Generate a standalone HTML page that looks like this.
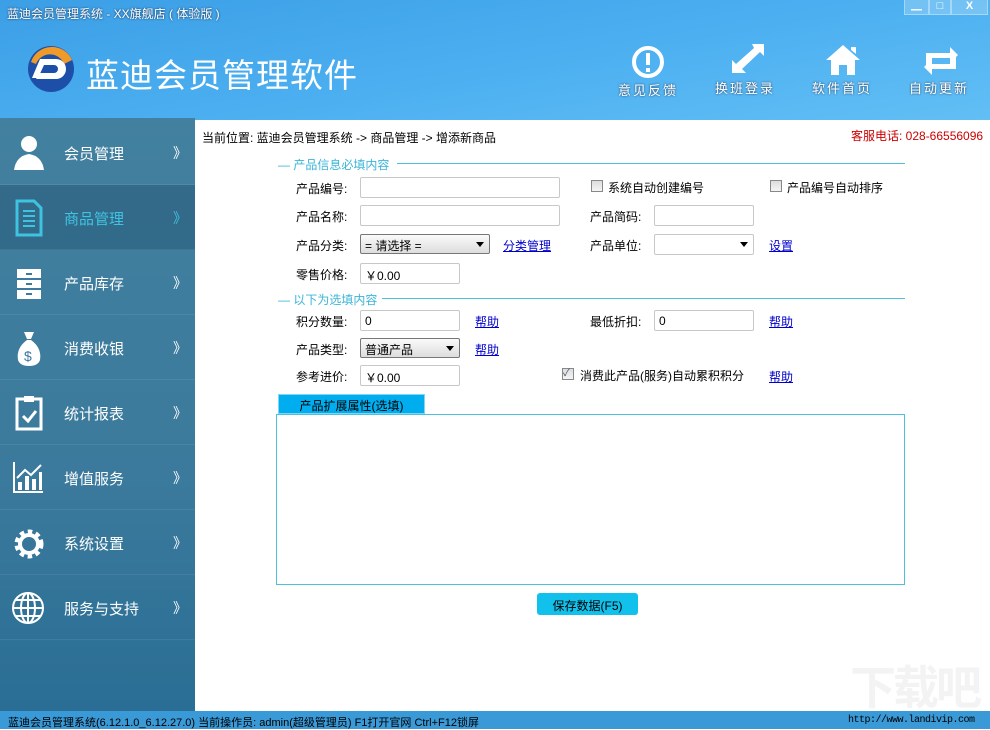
<!DOCTYPE html>
<html><head><meta charset="utf-8"><style>
*{margin:0;padding:0;box-sizing:border-box}
body{width:990px;height:729px;position:relative;overflow:hidden;background:#fff;font-family:"Liberation Sans","Noto Sans CJK SC",sans-serif;font-size:12px;color:#000}
.a{position:absolute;white-space:nowrap}
#hd{left:0;top:0;width:990px;height:120px;background:linear-gradient(170deg,#3c9fe6 0%,#4aaef0 50%,#62bff5 100%)}
.tb{color:#fff;font-size:13px;letter-spacing:2px;text-align:center;width:90px;text-shadow:0 0 2px #235}
#sb{left:0;top:118px;width:195px;height:593px;background:linear-gradient(180deg,#43809f,#3b7a9c 60%,#2a6e95)}
.it{left:0;width:195px;height:65px;border-bottom:1px solid rgba(255,255,255,.08)}
.it span{position:absolute;left:64px;top:23px;font-size:15px;color:#fff}
.it b{position:absolute;left:173px;top:23px;font-size:14px;color:#fff;font-weight:normal}
.inp{position:absolute;height:21px;border:1px solid #c8c8c8;border-radius:2px;background:#fff;font-size:12px;padding:3px 4px}
.lnk{color:#00c;text-decoration:underline}
.cb{position:absolute;width:12px;height:12px;border:1px solid #888;background:linear-gradient(#ddd,#f5f5f5)}
.sel{position:absolute;height:20px;border:1px solid #777;border-radius:2px;background:linear-gradient(#fafafa,#ddd);padding:2px 4px}
.arr{position:absolute;right:5px;top:7px;border:4px solid transparent;border-top:5px solid #000}
.wb{position:absolute;top:0;height:15px;background:rgba(255,255,255,.22);border:1px solid rgba(255,255,255,.35);border-top:none;color:#fff;font-size:11px;text-align:center;line-height:13px}
</style></head><body>
<div id="hd" class="a"></div>
<div class="a" style="left:7px;top:5px;color:#fff;font-size:12px;text-shadow:0 0 2px #124">蓝迪会员管理系统 - XX旗舰店 ( 体验版 )</div>
<div class="wb" style="left:904px;width:25px">▁</div>
<div class="wb" style="left:929px;width:22px">□</div>
<div class="wb" style="left:951px;width:37px;font-weight:bold">X</div>
<svg class="a" style="left:26px;top:44px" width="50" height="50" viewBox="0 0 50 50"><circle cx="25" cy="25" r="23" fill="#1e4fa8"/><path d="M5 18 A22 22 0 0 1 46 16 L38 20 A15 15 0 0 0 10 20Z" fill="#f09a2a"/><path d="M14 15 H30 A10 10 0 0 1 30 35 H10 L14 29 H28 A4 4 0 0 0 28 21 H18 L12 34 H6Z" fill="#fff"/></svg>
<div class="a" style="left:86px;top:49px;color:#fff;font-size:33px;letter-spacing:1px">蓝迪会员管理软件</div>
<svg class="a" style="left:631px;top:45px" width="34" height="34"><circle cx="17" cy="17" r="14" fill="none" stroke="#fff" stroke-width="4"/><rect x="15" y="8" width="4" height="12" fill="#fff"/><rect x="15" y="23" width="4" height="4" fill="#fff"/></svg>
<div class="a tb" style="left:603px;top:80px">意见反馈</div>
<svg class="a" style="left:728px;top:42px" width="38" height="34"><path d="M24 2 H36 V14 L32 10 L14 27 L18 31 H4 V18 L8 22 L26 6Z" fill="#fff"/></svg>
<div class="a tb" style="left:700px;top:78px">换班登录</div>
<svg class="a" style="left:825px;top:43px" width="36" height="34"><path d="M18 2 L35 17 H30 V32 H22 V22 H14 V32 H6 V17 H1Z M26 4 H31 V11 L26 7Z" fill="#fff"/></svg>
<div class="a tb" style="left:797px;top:78px">软件首页</div>
<svg class="a" style="left:922px;top:45px" width="38" height="32"><path d="M4 22 V8 H28 V2 L36 10 L28 18 V13 H10 V22Z M34 10 V24 H10 V30 L2 22 L10 14 V19 H28 V10Z" fill="#fff"/></svg>
<div class="a tb" style="left:894px;top:78px">自动更新</div>

<div id="sb" class="a"></div>
<div class="a it" style="top:120px"><span>会员管理</span><b>》</b></div>
<div class="a it" style="top:185px;background:rgba(20,60,90,.3)"><span style="color:#3ec3e0">商品管理</span><b style="color:#3ec3e0">》</b></div>
<div class="a it" style="top:250px"><span>产品库存</span><b>》</b></div>
<div class="a it" style="top:315px"><span>消费收银</span><b>》</b></div>
<div class="a it" style="top:380px"><span>统计报表</span><b>》</b></div>
<div class="a it" style="top:445px"><span>增值服务</span><b>》</b></div>
<div class="a it" style="top:510px"><span>系统设置</span><b>》</b></div>
<div class="a it" style="top:575px"><span>服务与支持</span><b>》</b></div>
<svg class="a" style="left:12px;top:134px" width="34" height="38"><circle cx="17" cy="10" r="8" fill="#fff"/><path d="M2 36 Q4 22 17 20 Q30 22 32 36Z" fill="#fff"/></svg>
<svg class="a" style="left:15px;top:199px" width="28" height="38"><path d="M2 2 H19 L26 9 V36 H2Z" fill="none" stroke="#3ec3e0" stroke-width="3"/><path d="M8 12H20M8 17H20M8 22H20M8 27H20" stroke="#3ec3e0" stroke-width="2"/></svg>
<svg class="a" style="left:15px;top:267px" width="28" height="34"><rect x="2" y="2" width="24" height="30" fill="#fff"/><path d="M2 12H26M2 22H26" stroke="#3b7a9c" stroke-width="2"/><path d="M11 7H17M11 17H17M11 27H17" stroke="#3b7a9c" stroke-width="2"/></svg>
<svg class="a" style="left:14px;top:330px" width="30" height="38"><path d="M10 2 H20 L17 9 H13Z M13 10 Q2 18 4 30 Q6 36 15 36 Q24 36 26 30 Q28 18 17 10Z" fill="#fff"/><text x="10" y="31" font-size="14" fill="#3b7a9c" font-family="Liberation Sans">$</text></svg>
<svg class="a" style="left:14px;top:394px" width="30" height="38"><rect x="3" y="5" width="24" height="30" fill="none" stroke="#fff" stroke-width="3"/><rect x="10" y="2" width="10" height="6" fill="#fff"/><path d="M9 22 L14 27 L22 17" fill="none" stroke="#fff" stroke-width="3"/></svg>
<svg class="a" style="left:12px;top:460px" width="32" height="34"><path d="M2 2 V32 H31" fill="none" stroke="#fff" stroke-width="2"/><path d="M6 30 V22 H10 V30Z M13 30 V16 H17 V30Z M20 30 V19 H24 V30Z M27 30 V12 H30 V30Z" fill="#fff"/><path d="M5 18 L13 10 L19 15 L29 5" fill="none" stroke="#fff" stroke-width="2"/></svg>
<svg class="a" style="left:12px;top:527px" width="34" height="34"><circle cx="17" cy="17" r="11" fill="none" stroke="#fff" stroke-width="7" stroke-dasharray="4 3.2"/><circle cx="17" cy="17" r="9" fill="none" stroke="#fff" stroke-width="4"/></svg>
<svg class="a" style="left:11px;top:591px" width="34" height="34"><circle cx="17" cy="17" r="15" fill="none" stroke="#fff" stroke-width="2"/><ellipse cx="17" cy="17" rx="7" ry="15" fill="none" stroke="#fff" stroke-width="2"/><path d="M2 17H32M5 9H29M5 25H29M17 2V32" stroke="#fff" stroke-width="2"/></svg>

<div class="a" style="left:202px;top:129px">当前位置: 蓝迪会员管理系统 -&gt; 商品管理 -&gt; 增添新商品</div>
<div class="a" style="left:851px;top:127px;color:#c00;font-size:12px">客服电话: 028-66556096</div>

<div class="a" style="left:278px;top:156px;color:#3ab5d8">— 产品信息必填内容</div>
<div class="a" style="left:397px;top:163px;width:508px;height:1px;background:#4cc0dc"></div>
<div class="a" style="left:296px;top:180px">产品编号:</div><div class="inp" style="left:360px;top:177px;width:200px"></div>
<div class="cb" style="left:591px;top:180px"></div><div class="a" style="left:608px;top:179px">系统自动创建编号</div>
<div class="cb" style="left:770px;top:180px"></div><div class="a" style="left:787px;top:179px">产品编号自动排序</div>
<div class="a" style="left:296px;top:208px">产品名称:</div><div class="inp" style="left:360px;top:205px;width:200px"></div>
<div class="a" style="left:590px;top:208px">产品简码:</div><div class="inp" style="left:654px;top:205px;width:100px"></div>
<div class="a" style="left:296px;top:237px">产品分类:</div><div class="sel" style="left:360px;top:234px;width:130px">= 请选择 =<i class="arr"></i></div>
<a class="a lnk" style="left:503px;top:237px">分类管理</a>
<div class="a" style="left:590px;top:237px">产品单位:</div><div class="inp" style="left:654px;top:234px;width:100px"><i class="arr"></i></div>
<a class="a lnk" style="left:769px;top:237px">设置</a>
<div class="a" style="left:296px;top:266px">零售价格:</div><div class="inp" style="left:360px;top:263px;width:100px">￥0.00</div>

<div class="a" style="left:278px;top:291px;color:#3ab5d8">— 以下为选填内容</div>
<div class="a" style="left:382px;top:298px;width:523px;height:1px;background:#4cc0dc"></div>
<div class="a" style="left:296px;top:313px">积分数量:</div><div class="inp" style="left:360px;top:310px;width:100px">0</div><a class="a lnk" style="left:475px;top:313px">帮助</a>
<div class="a" style="left:590px;top:313px">最低折扣:</div><div class="inp" style="left:654px;top:310px;width:100px">0</div><a class="a lnk" style="left:769px;top:313px">帮助</a>
<div class="a" style="left:296px;top:341px">产品类型:</div><div class="sel" style="left:360px;top:338px;width:100px">普通产品<i class="arr"></i></div><a class="a lnk" style="left:475px;top:341px">帮助</a>
<div class="a" style="left:296px;top:368px">参考进价:</div><div class="inp" style="left:360px;top:365px;width:100px">￥0.00</div>
<div class="cb" style="left:562px;top:368px;font-size:10px;line-height:10px;color:#456">✓</div><div class="a" style="left:580px;top:367px">消费此产品(服务)自动累积积分</div><a class="a lnk" style="left:769px;top:368px">帮助</a>

<div class="a" style="left:278px;top:394px;width:147px;height:20px;background:#00aeef;border:1px solid #7dd6f5;text-align:center;padding-top:2px">产品扩展属性(选填)</div>
<div class="a" style="left:276px;top:414px;width:629px;height:171px;border:1px solid #4cc0dc"></div>
<div class="a" style="left:537px;top:593px;width:101px;height:22px;background:#12c0ec;border-radius:3px;text-align:center;padding-top:4px">保存数据(F5)</div>

<div class="a" style="left:850px;top:652px;font-size:46px;color:#f3f3f3;letter-spacing:-3px;font-weight:bold">下载吧</div>
<div class="a" style="left:0;top:711px;width:990px;height:18px;background:#3a9ad8"></div>
<div class="a" style="left:8px;top:714px;font-size:11px">蓝迪会员管理系统(6.12.1.0_6.12.27.0) 当前操作员: admin(超级管理员) F1打开官网 Ctrl+F12锁屏</div>
<div class="a" style="left:848px;top:715px;font-size:10px;letter-spacing:-0.5px;font-family:'Liberation Mono',monospace">http://www.landivip.com</div>
</body></html>
